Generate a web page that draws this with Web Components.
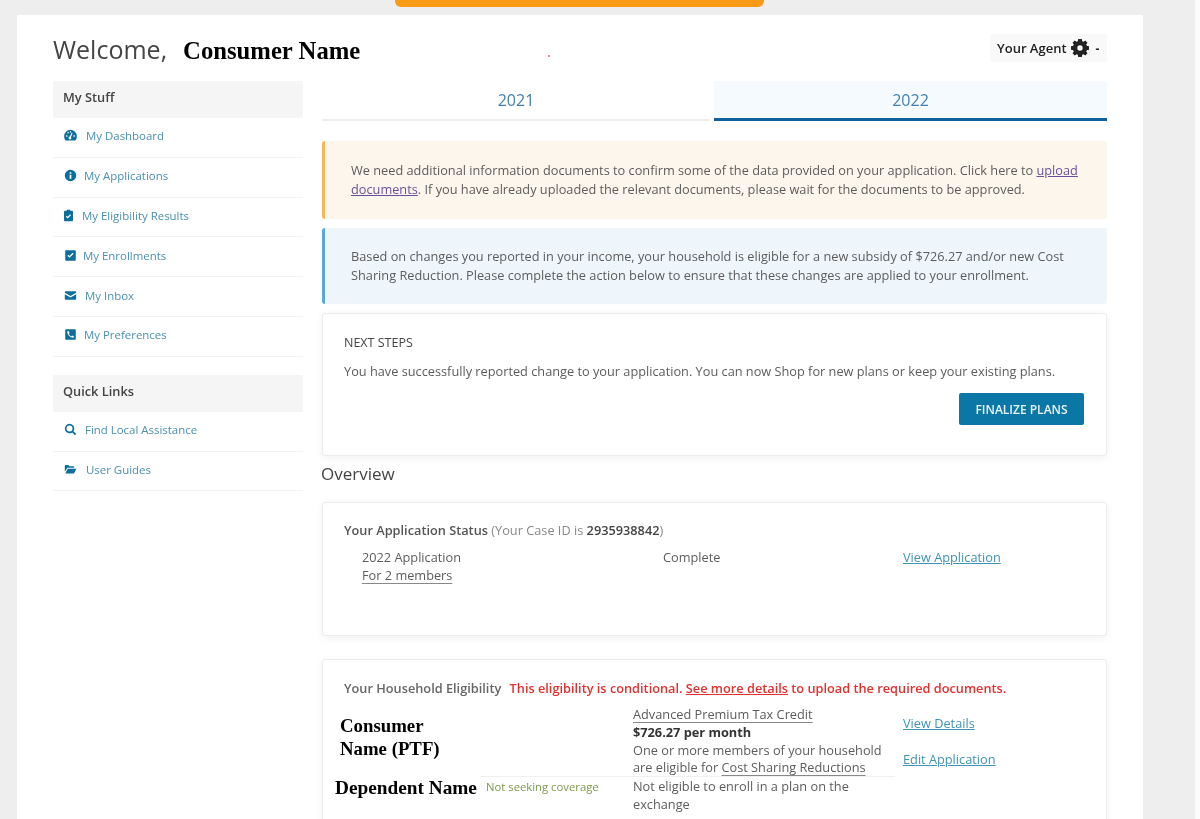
<!DOCTYPE html>
<html lang="en">
<head>
<meta charset="utf-8">
<title>My Dashboard</title>
<style>
  html, body {
    margin: 0;
    height: 819px;
    overflow: hidden;
    background: linear-gradient(to right, #eeeeee 1195px, #fbfbfb 1195px);
    font-family: "Open Sans", "Liberation Sans", sans-serif;
    font-size: 12.75px;
    color: #555;
  }
</style>
</head>
<body>
<dash-page>
  <dash-header slot="header"></dash-header>
  <side-nav slot="side">
    <nav-group title="My Stuff">
      <nav-link icon="gauge" gap="9" left="11">My Dashboard</nav-link>
      <nav-link icon="info" gap="7" left="11">My Applications</nav-link>
      <nav-link icon="clip" gap="7" left="9">My Eligibility Results</nav-link>
      <nav-link icon="check" gap="6" left="11">My Enrollments</nav-link>
      <nav-link icon="mail" gap="8" left="11">My Inbox</nav-link>
      <nav-link icon="phone" gap="7" left="11">My Preferences</nav-link>
    </nav-group>
    <nav-group title="Quick Links">
      <nav-link icon="search" gap="8" left="11">Find Local Assistance</nav-link>
      <nav-link icon="folder" gap="9" left="11">User Guides</nav-link>
    </nav-group>
  </side-nav>
  <div slot="main">
    <year-tabs></year-tabs>
    <alert-box kind="warn">We need additional information documents to confirm some of the data provided on your application. Click here to <a href="#" style="color:#6b4f9c">upload</a> <a href="#" style="color:#6b4f9c">documents</a>. If you have already uploaded the relevant documents, please wait for the documents to be approved.</alert-box>
    <alert-box kind="info">Based on changes you reported in your income, your household is eligible for a new subsidy of $726.27 and/or new Cost Sharing Reduction. Please complete the action below to ensure that these changes are applied to your enrollment.</alert-box>
    <next-steps></next-steps>
    <application-status></application-status>
    <household-eligibility></household-eligibility>
  </div>
</dash-page>

<script>
// Solid icons, all on a 16x16 box
const ICONS = {
  gauge: `<path fill-rule="evenodd" d="M8 1A7.800 7.800 0 0 0 .2 8.800c0 2.100.7 3.900 1.900 5.400h11.800c1.200-1.500 1.900-3.300 1.900-5.400A7.800 7.800 0 0 0 8 1ZM7.100 9.300l2.300-4.700 1.100.5-1.900 4.800a1.700 1.700 0 1 1-1.500-.6ZM7.200 2.700h1.600v1.600H7.200ZM2.700 7.800h1.600v1.600H2.700ZM11.700 7.800h1.600v1.600h-1.600ZM3.900 4.500l1.200-1 1 1.200-1.200 1Z"/>`,
  info: `<path fill-rule="evenodd" d="M8 1a7 7 0 1 0 0 14A7 7 0 0 0 8 1ZM6.900 3.900h2.200v2H6.900Zm0 3.200h2.200v5H6.900Z"/>`,
  clip: `<path fill-rule="evenodd" d="M6 1h4v1.300h2.500c.6 0 1 .4 1 1V14c0 .6-.4 1-1 1h-9c-.6 0-1-.4-1-1V3.300c0-.6.4-1 1-1H6ZM11 7.600l-1-1-3 3-1.200-1.200-1 1L7 11.600Z"/>`,
  check: `<path fill-rule="evenodd" d="M2.500 1.500h11c.6 0 1 .4 1 1v11c0 .6-.4 1-1 1h-11c-.6 0-1-.4-1-1v-11c0-.6.4-1 1-1Zm9.300 4.300-1.100-1.100-3.900 3.900-1.500-1.500-1.100 1.100 2.600 2.600Z"/>`,
  mail: `<path d="M1 4c0-.8.6-1.300 1.300-1.300h11.400c.7 0 1.300.5 1.300 1.300v.6L8 8.600 1 4.600Z"/><path d="M1 6.400l7 4 7-4V12c0 .8-.6 1.300-1.300 1.300H2.300C1.600 13.300 1 12.800 1 12Z"/>`,
  phone: `<path fill-rule="evenodd" d="M2.500 1.500h11c.6 0 1 .4 1 1v11c0 .6-.4 1-1 1h-11c-.6 0-1-.4-1-1v-11c0-.6.4-1 1-1ZM5.600 3.800 4 4.300c-.2 4 3.700 7.900 7.700 7.700l.5-1.800-2.300-1-1 1.200C7.700 9.800 6.300 8.400 5.900 7.200L7 6.100Z"/>`,
  search: `<path fill-rule="evenodd" d="M6.800 1a5.800 5.800 0 1 0 3.300 10.600l3.400 3.400 1.500-1.500-3.400-3.400A5.800 5.800 0 0 0 6.800 1Zm0 2.100a3.700 3.700 0 1 1 0 7.400 3.700 3.700 0 0 1 0-7.400Z"/>`,
  folder: `<path d="M1 3.500c0-.5.4-.9.900-.9h3.500l1.400 1.500h4.800c.5 0 .9.400.9.900v.9H4.200L1 10.800Z"/><path d="M4.600 7h10.600l-2.800 5.600c-.1.300-.4.400-.7.400H1.600Z"/>`,
  cog: `<path fill-rule="evenodd" d="M6.200 0h3.600l.4 2.200 1.300.6L13.300 1.500l2.200 2.200-1.300 1.800.6 1.300 2.200.4v3.600l-2.200.4-.6 1.300 1.300 1.800-2.200 2.200-1.800-1.300-1.300.6-.4 2.200H6.200l-.4-2.200-1.300-.6-1.800 1.300L.5 14.300l1.300-1.800-.6-1.300L-1 10.800V7.200l2.200-.4.6-1.300L.5 3.700l2.200-2.200 1.800 1.300 1.300-.6ZM8 6.300a2.700 2.700 0 1 0 0 5.400 2.700 2.700 0 0 0 0-5.400Z" transform="translate(0 -1)"/>`
};

class AppIcon extends HTMLElement {
  constructor() {
    super();
    const size = this.getAttribute("size") || 12;
    this.attachShadow({ mode: "open" }).innerHTML = `
      <style>
        :host { display: inline-flex; flex: none; }
        svg { display: block; fill: currentColor; overflow: visible; }
      </style>
      <svg width="${size}" height="${size}" viewBox="0 0 16 16">${ICONS[this.getAttribute("name")]}</svg>`;
  }
}
customElements.define("app-icon", AppIcon);

class DashPage extends HTMLElement {
  constructor() {
    super();
    this.attachShadow({ mode: "open" }).innerHTML = `
      <style>
        :host { display: block; height: 819px; position: relative; }
        .promo {
          width: 369px; height: 7px; margin-left: 395px;
          background: #fb9a14; border-radius: 0 0 6px 6px;
        }
        .panel {
          width: 1126px; height: 804px; margin: 8px 0 0 17px;
          padding: 18px 36px 0; box-sizing: border-box;
          background: #fff; overflow: hidden;
          filter: blur(.5px);
        }
        .cols { display: flex; gap: 19px; margin-top: 18px; }
        .side { flex: 0 0 250px; }
        .main { flex: 0 0 785px; }
      </style>
      <div class="promo"></div>
      <div class="panel">
        <slot name="header"></slot>
        <div class="cols">
          <div class="side"><slot name="side"></slot></div>
          <div class="main"><slot name="main"></slot></div>
        </div>
      </div>`;
  }
}
customElements.define("dash-page", DashPage);

class DashHeader extends HTMLElement {
  constructor() {
    super();
    this.attachShadow({ mode: "open" }).innerHTML = `
      <style>
        :host { display: flex; justify-content: space-between; height: 30px; }
        .hi { display: flex; align-items: baseline; gap: 16px; color: #444; font-size: 25px; line-height: 32px; }
        .name { font: bold 24.700px "Liberation Serif", serif; color: #000; }
        .dot { position: absolute; left: 531px; top: 40px; width: 2px; height: 2px; background: #f4566a; border-radius: 50%; }
        .agent {
          display: flex; align-items: center; gap: 5px;
          width: 117px; height: 28px; margin-top: 1px; padding-left: 7px; box-sizing: border-box;
          background: #f9f9f9; color: #222; font-size: 13px; font-weight: 600;
        }
        .caret { font-size: 12px; font-weight: 700; margin-left: 3px; }
      </style>
      <div class="hi"><span>Welcome,</span><span class="name">Consumer Name</span></div>
      <span class="dot"></span>
      <div class="agent"><span>Your Agent</span><app-icon name="cog" size="16"></app-icon><span class="caret">-</span></div>`;
  }
}
customElements.define("dash-header", DashHeader);

class SideNav extends HTMLElement {
  constructor() {
    super();
    this.attachShadow({ mode: "open" }).innerHTML = `
      <style>:host { display: flex; flex-direction: column; gap: 18px; }</style>
      <slot></slot>`;
  }
}
customElements.define("side-nav", SideNav);

class NavGroup extends HTMLElement {
  constructor() {
    super();
    this.attachShadow({ mode: "open" }).innerHTML = `
      <style>
        :host { display: block; }
        h3 {
          margin: 0; height: 37px; padding: 0 0 5px 10px; box-sizing: border-box;
          display: flex; align-items: center;
          background: #f5f5f5; border-radius: 2px;
          color: #444; font-size: 12.800px; font-weight: 600;
        }
      </style>
      <h3>${this.getAttribute("title")}</h3>
      <slot></slot>`;
  }
}
customElements.define("nav-group", NavGroup);

class NavLink extends HTMLElement {
  constructor() {
    super();
    const left = this.getAttribute("left") || 11;
    const gap = this.getAttribute("gap") || 8;
    this.attachShadow({ mode: "open" }).innerHTML = `
      <style>
        :host {
          display: flex; align-items: center; height: 39.800px; box-sizing: border-box;
          padding: 0 0 3px ${left}px; gap: ${gap}px;
          border-bottom: 1px solid #f3f3f3;
          color: #4a8fb0; font-size: 11.450px;
        }
        app-icon { color: #0b6e9c; }
      </style>
      <app-icon name="${this.getAttribute("icon")}" size="13"></app-icon>
      <slot></slot>`;
  }
}
customElements.define("nav-link", NavLink);

class YearTabs extends HTMLElement {
  constructor() {
    super();
    this.attachShadow({ mode: "open" }).innerHTML = `
      <style>
        :host { display: flex; gap: 4px; height: 40px; }
        div {
          display: flex; align-items: center; justify-content: center;
          box-sizing: border-box; color: #4480ad; font-size: 16px;
          border-bottom: 2px solid #eeeeee;
        }
        .old { flex: 0 0 388px; }
        .cur {
          flex: 1; background: #f5fafe; border-bottom: 3px solid #0d619f;
          border-radius: 2px 2px 0 0;
        }
      </style>
      <div class="old">2021</div>
      <div class="cur">2022</div>`;
  }
}
customElements.define("year-tabs", YearTabs);

class AlertBox extends HTMLElement {
  constructor() {
    super();
    const warn = this.getAttribute("kind") === "warn";
    this.attachShadow({ mode: "open" }).innerHTML = `
      <style>
        :host {
          display: block; box-sizing: border-box;
          margin-top: ${warn ? 20 : 9}px;
          height: ${warn ? 78 : 76}px;
          padding: ${warn ? 20 : 19}px 26px 0;
          background: ${warn ? "#fdf6ec" : "#eef6fc"};
          border-left: 3px solid ${warn ? "#f8b656" : "#5aa8d8"};
          border-radius: 3px;
          color: #5c5c5c; font-size: 12.750px; line-height: 19px;
        }
      </style>
      <slot></slot>`;
  }
}
customElements.define("alert-box", AlertBox);

// Shared card look, passed to the three cards below
const CARD_CSS = `
  .card {
    box-sizing: border-box; padding: 0 21px; background: #fff;
    border: 1px solid #ececec; border-radius: 3px;
    box-shadow: 0 2px 8px rgba(0, 0, 0, .06);
  }
  a { color: #3f93b5; }
`;

class NextSteps extends HTMLElement {
  constructor() {
    super();
    this.attachShadow({ mode: "open" }).innerHTML = `
      <style>
        ${CARD_CSS}
        :host { display: block; margin-top: 9px; font-size: 12.750px; color: #5c5c5c; }
        .card { height: 143px; padding-top: 20px; }
        h4 { margin: 0; font-size: 12.500px; font-weight: 400; color: #444; line-height: 17px; }
        p { margin: 12px 0 0; line-height: 17px; }
        .row { display: flex; justify-content: flex-end; margin: 13px 1px 0 0; }
        button {
          width: 125px; height: 32px; border: 0; border-radius: 2px;
          background: #0a77a6; color: #e8f3f8;
          font: 600 12px "Open Sans", sans-serif;
        }
        h2 { margin: 8px 0 0 -1px; font-size: 17px; font-weight: 400; color: #444; line-height: 19px; }
      </style>
      <div class="card">
        <h4>NEXT STEPS</h4>
        <p>You have successfully reported change to your application. You can now Shop for new plans or keep your existing plans.</p>
        <div class="row"><button>FINALIZE PLANS</button></div>
      </div>
      <h2>Overview</h2>`;
  }
}
customElements.define("next-steps", NextSteps);

class ApplicationStatus extends HTMLElement {
  constructor() {
    super();
    this.attachShadow({ mode: "open" }).innerHTML = `
      <style>
        ${CARD_CSS}
        :host { display: block; margin-top: 19px; font-size: 12.750px; color: #5c5c5c; }
        .card { height: 134px; padding-top: 19px; }
        .title { line-height: 17px; color: #888; }
        .title b { font-weight: 600; color: #555; }
        .title strong { font-weight: 600; color: #444; }
        .grid {
          display: grid; grid-template-columns: 301px 240px auto;
          margin: 9px 0 0 18px; line-height: 18px;
        }
        u { text-decoration-color: #888; text-underline-offset: 3px; }
      </style>
      <div class="card">
        <div class="title"><b>Your Application Status</b> (Your Case ID is <strong>2935938842</strong>)</div>
        <div class="grid">
          <div>2022 Application<br><u>For 2 members</u></div>
          <div>Complete</div>
          <div><a href="#">View Application</a></div>
        </div>
      </div>`;
  }
}
customElements.define("application-status", ApplicationStatus);

class HouseholdEligibility extends HTMLElement {
  constructor() {
    super();
    this.attachShadow({ mode: "open" }).innerHTML = `
      <style>
        ${CARD_CSS}
        :host { display: block; margin-top: 23px; font-size: 12.750px; color: #5c5c5c; }
        .card { height: 200px; padding-top: 20px; }
        .title { line-height: 17px; }
        .title b { font-weight: 600; color: #666; }
        .warn { margin-left: 5px; color: #e5302e; font-weight: 600; }
        .warn a { color: #e5302e; }
        .grid {
          display: grid; grid-template-columns: 136px 153px 262px auto; grid-template-rows: 70px auto;
          margin-top: 9px; line-height: 17.800px;
        }
        .serif { font: bold 18.800px/23px "Liberation Serif", serif; color: #000; }
        .consumer { margin: 8px 0 0 -4px; }
        .dependent { margin-left: -9px; font-size: 19.300px; white-space: nowrap; }
        .status { border-top: 1px solid #f0f0f0; padding: 1px 0 0 6px; color: #7d9a4e; font-size: 11.300px; }
        .detail { border-top: 1px solid #f0f0f0; padding-top: 1px; }
        .links { padding-left: 8px; display: flex; flex-direction: column; align-items: flex-start; gap: 18.200px; padding-top: 9px; }
        .amount { font-weight: 700; color: #333; }
        u { text-decoration-color: #888; text-underline-offset: 3px; }
      </style>
      <div class="card">
        <div class="title"><b>Your Household Eligibility</b> <span class="warn">This eligibility is conditional. <a href="#">See more details</a> to upload the required documents.</span></div>
        <div class="grid">
          <div class="serif consumer">Consumer<br>Name (PTF)</div>
          <div></div>
          <div>
            <u>Advanced Premium Tax Credit</u><br>
            <span class="amount">$726.27 per month</span><br>
            One or more members of your household<br>
            are eligible for <u>Cost Sharing Reductions</u>
          </div>
          <div class="links"><a href="#">View Details</a><a href="#">Edit Application</a></div>
          <div class="serif dependent">Dependent Name</div>
          <div class="status">Not seeking coverage</div>
          <div class="detail">Not eligible to enroll in a plan on the<br>exchange</div>
          <div></div>
        </div>
      </div>`;
  }
}
customElements.define("household-eligibility", HouseholdEligibility);
</script>
</body>
</html>
